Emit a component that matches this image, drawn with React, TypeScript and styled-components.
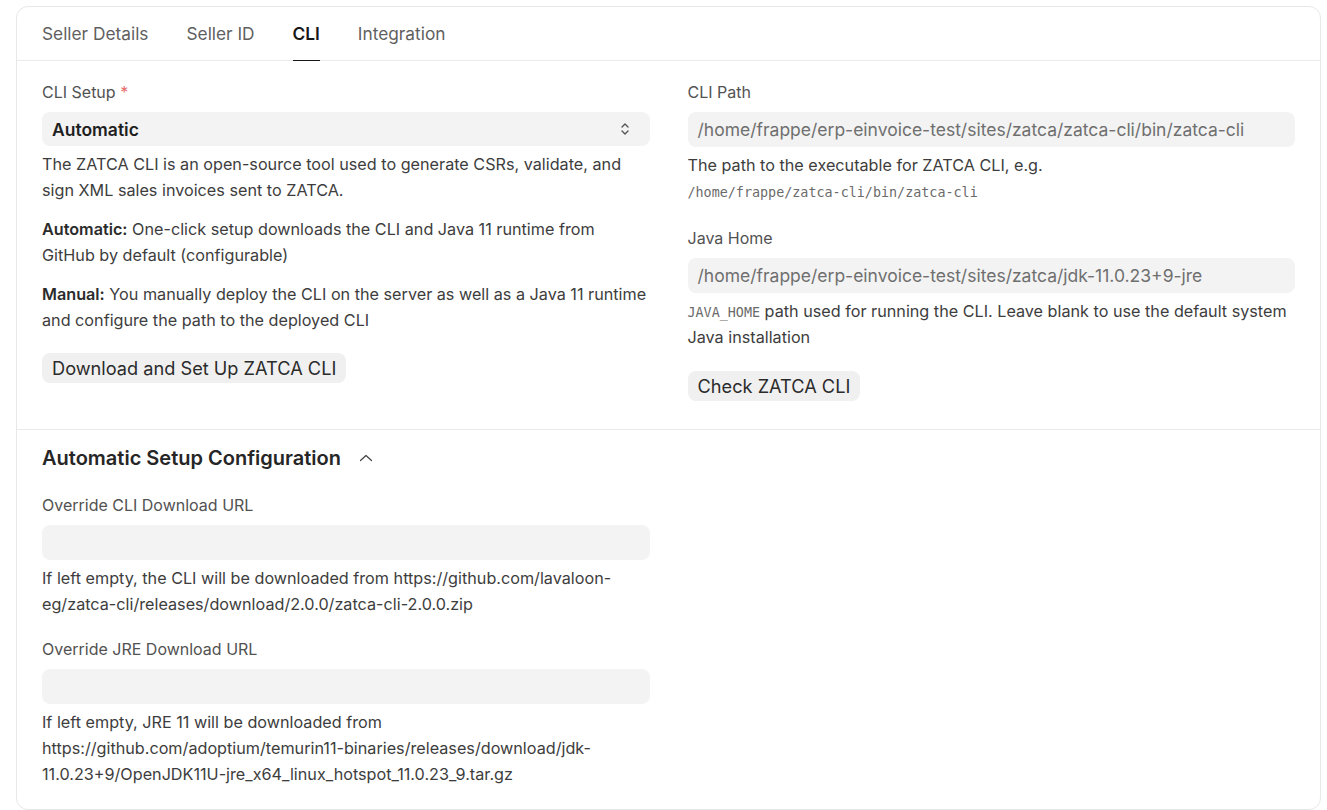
import { createGlobalStyle, styled } from "styled-components";

const GlobalStyle = createGlobalStyle`
  body {
    margin: 0;
    background: #fff;
    font-family: Inter, "Noto Sans", sans-serif;
    color: #3d3d3d;
  }
`;

function App() {
  return (
    <>
      <GlobalStyle />
      <Page>
        <Card>
          <Tabs>
            <Tab>Seller Details</Tab>
            <Tab>Seller ID</Tab>
            <Tab $active>CLI</Tab>
            <Tab>Integration</Tab>
          </Tabs>

          <Section>
            <Columns>
              <Column>
                <Field>
                  <Label>
                    CLI Setup <Required>*</Required>
                  </Label>
                  <Select>
                    <span>Automatic</span>
                    <svg width="12" height="16" viewBox="0 0 12 16" fill="none">
                      <path d="M3 6l3-3 3 3" stroke="#555" strokeWidth="1.4" strokeLinecap="round" strokeLinejoin="round" />
                      <path d="M3 10l3 3 3-3" stroke="#555" strokeWidth="1.4" strokeLinecap="round" strokeLinejoin="round" />
                    </svg>
                  </Select>
                  <Description>
                    <p>
                      The ZATCA CLI is an open-source tool used to generate CSRs, validate, and sign XML
                      sales invoices sent to ZATCA.
                    </p>
                    <p>
                      <b>Automatic:</b> One-click setup downloads the CLI and Java 11 runtime from GitHub
                      by default (configurable)
                    </p>
                    <p>
                      <b>Manual:</b> You manually deploy the CLI on the server as well as a Java 11 runtime
                      and configure the path to the deployed CLI
                    </p>
                  </Description>
                </Field>
                <Button>Download and Set Up ZATCA CLI</Button>
              </Column>

              <Column>
                <Field>
                  <Label>CLI Path</Label>
                  <Input $muted>/home/frappe/erp-einvoice-test/sites/zatca/zatca-cli/bin/zatca-cli</Input>
                  <Description>
                    <p>
                      The path to the executable for ZATCA CLI, e.g.
                      <br />
                      <Code>/home/frappe/zatca-cli/bin/zatca-cli</Code>
                    </p>
                  </Description>
                </Field>
                <Field>
                  <Label>Java Home</Label>
                  <Input $muted>/home/frappe/erp-einvoice-test/sites/zatca/jdk-11.0.23+9-jre</Input>
                  <Description>
                    <p>
                      <Code>JAVA_HOME</Code> path used for running the CLI. Leave blank to use the default
                      system Java installation
                    </p>
                  </Description>
                </Field>
                <Button $offset={1}>Check ZATCA CLI</Button>
              </Column>
            </Columns>
          </Section>

          <Section $last>
            <SectionHead>
              Automatic Setup Configuration
              <svg width="16" height="16" viewBox="0 0 16 16" fill="none">
                <path d="M2.5 10.5l5.5-5 5.5 5" stroke="#444" strokeWidth="1.2" strokeLinecap="round" strokeLinejoin="round" />
              </svg>
            </SectionHead>
            <Columns>
              <Column $gap={22}>
                <Field>
                  <Label>Override CLI Download URL</Label>
                  <Input />
                  <Description>
                    <p>
                      If left empty, the CLI will be downloaded from
                      https://github.com/lavaloon-eg/zatca-cli/releases/download/2.0.0/zatca-cli-2.0.0.zip
                    </p>
                  </Description>
                </Field>
                <Field>
                  <Label>Override JRE Download URL</Label>
                  <Input />
                  <Description>
                    <p>
                      If left empty, JRE 11 will be downloaded from
                      https://github.com/adoptium/temurin11-binaries/releases/download/jdk-11.0.23+9/OpenJDK11U-jre_x64_linux_hotspot_11.0.23_9.tar.gz
                    </p>
                  </Description>
                </Field>
              </Column>
              <Column />
            </Columns>
          </Section>
        </Card>
      </Page>
    </>
  );
}

const Page = styled.div`
  padding: 6px 6px 1px 16px;
`;

const Card = styled.div`
  border: 1px solid #e8e8e8;
  border-radius: 12px;
  background: #fff;
`;

const Tabs = styled.div`
  display: flex;
  gap: 38px;
  height: 53px;
  padding-left: 25px;
  border-bottom: 1px solid #ebebeb;
`;

const Tab = styled.div<{ $active?: boolean }>`
  display: flex;
  align-items: center;
  font-size: 17.3px;
  color: ${({ $active }) => ($active ? "#171717" : "#5f5f5f")};
  font-weight: ${({ $active }) => ($active ? 600 : 400)};
  border-bottom: 1.5px solid ${({ $active }) => ($active ? "#171717" : "transparent")};
  margin-bottom: -1px;
`;

const Section = styled.div<{ $last?: boolean }>`
  padding: ${({ $last }) => ($last ? "15px 25px 22px" : "21px 25px 28px")};
  border-bottom: ${({ $last }) => ($last ? "none" : "1px solid #ebebeb")};
`;

const SectionHead = styled.div`
  display: flex;
  align-items: center;
  gap: 17px;
  font-size: 20px;
  line-height: 26px;
  font-weight: 600;
  color: #262626;
  margin-bottom: 24px;
`;

const Columns = styled.div`
  display: grid;
  grid-template-columns: 1fr 1fr;
  gap: 38px;
`;

const Column = styled.div<{ $gap?: number }>`
  display: flex;
  flex-direction: column;
  align-items: flex-start;
  gap: ${({ $gap = 24 }) => $gap}px;
`;

const Field = styled.div`
  width: 100%;
  display: flex;
  flex-direction: column;
`;

const Label = styled.div`
  font-size: 16px;
  line-height: 20px;
  color: #525252;
  margin-bottom: 10px;
`;

const Required = styled.span`
  color: #e86c6c;
`;

const Select = styled.div`
  height: 34px;
  border-radius: 8px;
  background: #f3f3f3;
  display: flex;
  align-items: center;
  justify-content: space-between;
  padding: 0 19px 0 10px;
  font-size: 17.5px;
  font-weight: 600;
  color: #1f1f1f;
`;

const Input = styled.div<{ $muted?: boolean }>`
  height: 35px;
  border-radius: 8px;
  background: #f3f3f3;
  display: flex;
  align-items: center;
  padding: 0 10px;
  font-size: 17.5px;
  color: ${({ $muted }) => ($muted ? "#6f6f6f" : "#1f1f1f")};
  white-space: nowrap;
  overflow: hidden;
`;

const Description = styled.div`
  margin-top: 5px;
  font-size: 16.2px;
  line-height: 26px;
  color: #3d3d3d;

  p {
    margin: 0 0 13px;
  }

  p:last-child {
    margin-bottom: 0;
  }

  b {
    font-weight: 600;
    color: #2b2b2b;
  }
`;

const Code = styled.code`
  font-family: "DejaVu Sans Mono", "Liberation Mono", monospace;
  font-size: 13.4px;
  line-height: 1;
  color: #6b6b6b;
`;

const Button = styled.button<{ $offset?: number }>`
  border: none;
  background: #f0f0f0;
  border-radius: 8px;
  height: 30px;
  padding: 0 10px;
  font-family: Inter, "Noto Sans", sans-serif;
  font-size: 18.2px;
  color: #2b2b2b;
  margin-top: ${({ $offset = 0 }) => -4 + $offset}px;
`;

export default App;
